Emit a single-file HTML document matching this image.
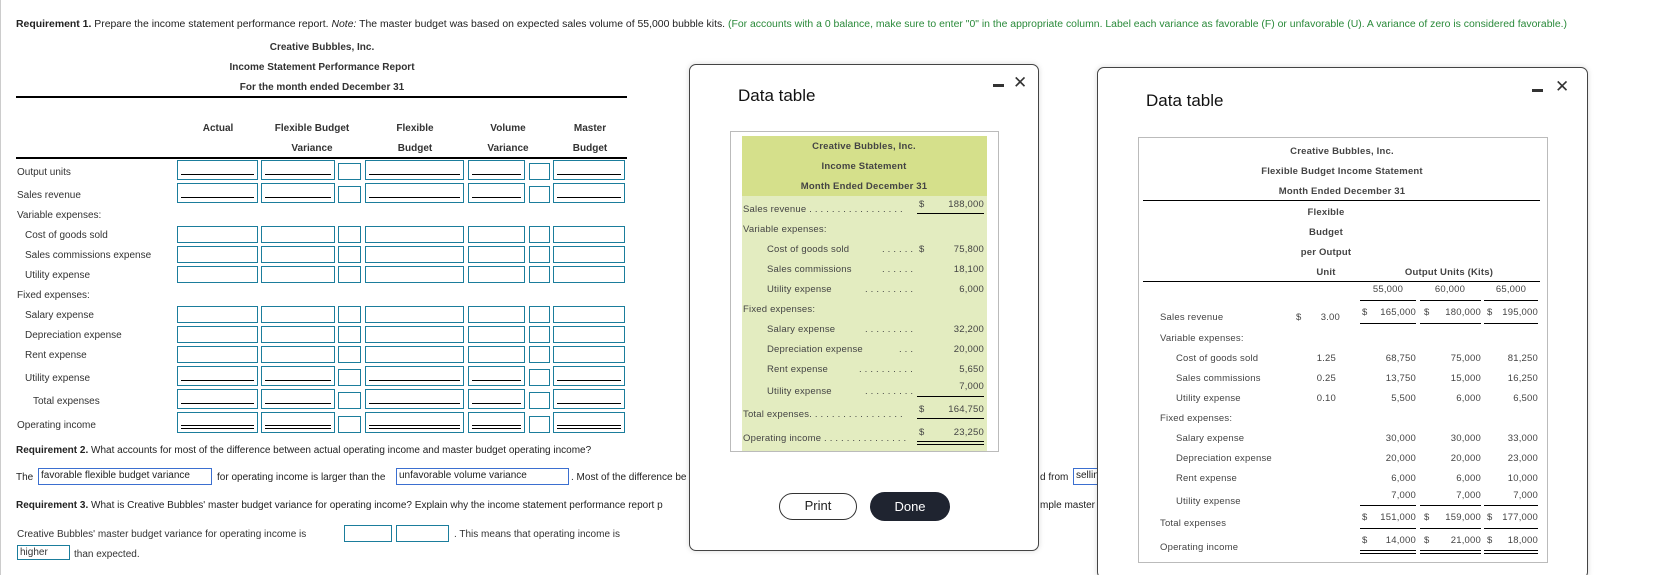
<!DOCTYPE html>
<html><head><meta charset="utf-8"><style>
*{margin:0;padding:0;box-sizing:border-box}
html{width:1661px;height:575px;overflow:hidden}
body{width:1661px;height:575px;background:#fff;position:relative;overflow:hidden;font-family:"Liberation Sans",Arial,sans-serif;color:#333;font-size:10px}
.t{position:absolute;white-space:nowrap;line-height:12px}
.c{transform:translateX(-50%)}
.r{transform:translateX(-100%)}
.b{font-weight:bold}
.bx{position:absolute;border:1px solid #1b7d9c;background:#fff}
.ul{position:absolute;left:3px;right:3px;bottom:4px;border-top:1px solid #000}
.dl{position:absolute;left:3px;right:3px;bottom:3px;height:4px;border-top:1px solid #000;border-bottom:1px solid #000}
.hl{position:absolute;background:#000;height:1px}
.ab{position:absolute;border:1px solid #3b6fd0;background:#fff;font-size:10px;line-height:14px;padding-left:2px;color:#222}
.modal{position:absolute;background:#fff;border:1.5px solid #444;border-radius:7px;box-shadow:0 0 6px rgba(0,0,0,.15)}
.m{font-size:9.5px;color:#444;letter-spacing:.2px}
.mb{font-weight:bold;color:#444;font-size:9.5px;letter-spacing:.2px}
</style></head><body>
<div style="position:absolute;left:0;top:0;width:1px;height:575px;background:#ccc"></div>
<svg style="position:absolute;left:0;top:0" width="1661" height="40"><text x="16" y="27" font-family="Liberation Sans, Arial, sans-serif" font-size="10" fill="#222" textLength="1551" lengthAdjust="spacingAndGlyphs"><tspan font-weight="bold">Requirement 1.</tspan> Prepare the income statement performance report. <tspan font-style="italic">Note:</tspan> The master budget was based on expected sales volume of 55,000 bubble kits. <tspan fill="#2a8a3a">(For accounts with a 0 balance, make sure to enter "0" in the appropriate column. Label each variance as favorable (F) or unfavorable (U). A variance of zero is considered favorable.)</tspan></text></svg>

<div class="t b c" style="left:322px;top:42px">Creative Bubbles, Inc.</div>
<div class="t b c" style="left:322px;top:62px">Income Statement Performance Report</div>
<div class="t b c" style="left:322px;top:82px">For the month ended December 31</div>
<div class="hl" style="left:16px;width:611px;top:96px;height:1.5px"></div>
<div class="t b c" style="left:218px;top:123px">Actual</div>
<div class="t b c" style="left:312px;top:123px">Flexible Budget</div>
<div class="t b c" style="left:312px;top:143px">Variance</div>
<div class="t b c" style="left:415px;top:123px">Flexible</div>
<div class="t b c" style="left:415px;top:143px">Budget</div>
<div class="t b c" style="left:508px;top:123px">Volume</div>
<div class="t b c" style="left:508px;top:143px">Variance</div>
<div class="t b c" style="left:590px;top:123px">Master</div>
<div class="t b c" style="left:590px;top:143px">Budget</div>
<div class="hl" style="left:16px;width:611px;top:157px;height:1.5px"></div>

<div class="t" style="left:17px;top:167px">Output units</div>
<div class="t" style="left:17px;top:190px">Sales revenue</div>
<div class="t" style="left:17px;top:210px">Variable expenses:</div>
<div class="t" style="left:25px;top:230px">Cost of goods sold</div>
<div class="t" style="left:25px;top:250px">Sales commissions expense</div>
<div class="t" style="left:25px;top:270px">Utility expense</div>
<div class="t" style="left:17px;top:290px">Fixed expenses:</div>
<div class="t" style="left:25px;top:310px">Salary expense</div>
<div class="t" style="left:25px;top:330px">Depreciation expense</div>
<div class="t" style="left:25px;top:350px">Rent expense</div>
<div class="t" style="left:25px;top:373px">Utility expense</div>
<div class="t" style="left:33px;top:396px">Total expenses</div>
<div class="t" style="left:17px;top:420px">Operating income</div>

<div class="t" style="left:16px;top:445px;color:#222"><b>Requirement 2.</b> What accounts for most of the difference between actual operating income and master budget operating income?</div>
<div class="t" style="left:16px;top:472px;color:#222">The</div>
<div class="ab" style="left:38px;top:468px;width:174px;height:17px">favorable flexible budget variance</div>
<div class="t" style="left:217px;top:472px;color:#222">for operating income is larger than the</div>
<div class="ab" style="left:396px;top:468px;width:173px;height:17px">unfavorable volume variance</div>
<div class="t" style="left:571px;top:472px;color:#222">. Most of the difference be</div>
<div class="t" style="left:16px;top:500px;color:#222"><b>Requirement 3.</b> What is Creative Bubbles' master budget variance for operating income? Explain why the income statement performance report p</div>
<div class="t" style="left:17px;top:529px">Creative Bubbles' master budget variance for operating income is</div>
<div class="bx" style="left:344px;top:525px;width:48px;height:17px"></div>
<div class="bx" style="left:396px;top:525px;width:53px;height:17px"></div>
<div class="t" style="left:454px;top:529px">. This means that operating income is</div>
<div class="bx" style="left:17px;top:545px;width:53px;height:15px;font-size:10px;line-height:13px;padding-left:2px">higher</div>
<div class="t" style="left:74px;top:549px">than expected.</div>

<div class="t" style="left:1040px;top:472px;color:#222">d from</div>
<div class="ab" style="left:1073px;top:468px;width:40px;height:17px">selling</div>
<div class="t" style="left:1040px;top:500px;color:#222">mple master</div>

<!-- Modal 1 -->
<div class="modal" style="left:689px;top:64px;width:350px;height:487px">
 <div class="t" style="left:48px;top:21px;font-size:17px;line-height:20px;color:#111">Data table</div>
 <div style="position:absolute;left:303px;top:19px;width:11px;height:2.5px;background:#333"></div>
 <div class="t" style="left:323px;top:8px;font-size:17px;line-height:20px;color:#333">✕</div>
 <div style="position:absolute;left:40px;top:66px;width:269px;height:321px;border:1px solid #bbb"></div>
 <div style="position:absolute;left:52px;top:71px;width:245px;height:60px;background:#d5e08b"></div>
 <div style="position:absolute;left:52px;top:131px;width:245px;height:255px;background:#e3ecc0"></div>
</div>
<div class="t mb c" style="left:864px;top:141px">Creative Bubbles, Inc.</div>
<div class="t mb c" style="left:864px;top:161px">Income Statement</div>
<div class="t mb c" style="left:864px;top:181px">Month Ended December 31</div>
<div class="t m" style="left:743px;top:204px">Sales revenue . . . . . . . . . . . . . . . . .</div>
<div class="t m" style="left:919px;top:199px">$</div>
<div class="t m r" style="left:984px;top:199px">188,000</div>
<div class="hl" style="left:917px;width:67px;top:213px"></div>
<div class="t m" style="left:743px;top:224px">Variable expenses:</div>
<div class="t m" style="left:767px;top:244px">Cost of goods sold</div><div class="t m" style="left:882px;top:244px">. . . . . .</div>
<div class="t m" style="left:919px;top:244px">$</div><div class="t m r" style="left:984px;top:244px">75,800</div>
<div class="t m" style="left:767px;top:264px">Sales commissions</div><div class="t m" style="left:882px;top:264px">. . . . . .</div>
<div class="t m r" style="left:984px;top:264px">18,100</div>
<div class="t m" style="left:767px;top:284px">Utility expense</div><div class="t m" style="left:865px;top:284px">. . . . . . . . .</div>
<div class="t m r" style="left:984px;top:284px">6,000</div>
<div class="t m" style="left:743px;top:304px">Fixed expenses:</div>
<div class="t m" style="left:767px;top:324px">Salary expense</div><div class="t m" style="left:865px;top:324px">. . . . . . . . .</div>
<div class="t m r" style="left:984px;top:324px">32,200</div>
<div class="t m" style="left:767px;top:344px">Depreciation expense</div><div class="t m" style="left:899px;top:344px">. . .</div>
<div class="t m r" style="left:984px;top:344px">20,000</div>
<div class="t m" style="left:767px;top:364px">Rent expense</div><div class="t m" style="left:859px;top:364px">. . . . . . . . . .</div>
<div class="t m r" style="left:984px;top:364px">5,650</div>
<div class="t m" style="left:767px;top:386px">Utility expense</div><div class="t m" style="left:865px;top:386px">. . . . . . . . .</div>
<div class="t m r" style="left:984px;top:381px">7,000</div>
<div class="hl" style="left:917px;width:67px;top:396px"></div>
<div class="t m" style="left:743px;top:409px">Total expenses. . . . . . . . . . . . . . . . .</div>
<div class="t m" style="left:919px;top:404px">$</div><div class="t m r" style="left:984px;top:404px">164,750</div>
<div class="hl" style="left:917px;width:67px;top:418px"></div>
<div class="t m" style="left:743px;top:433px">Operating income . . . . . . . . . . . . . . .</div>
<div class="t m" style="left:919px;top:427px">$</div><div class="t m r" style="left:984px;top:427px">23,250</div>
<div class="hl" style="left:917px;width:67px;top:441px"></div>
<div class="hl" style="left:917px;width:67px;top:444px"></div>
<div style="position:absolute;left:779px;top:493px;width:78px;height:27px;border:1.5px solid #333;border-radius:14px;text-align:center;line-height:24px;font-size:13px;color:#222">Print</div>
<div style="position:absolute;left:870px;top:492px;width:80px;height:29px;background:#1f2430;border-radius:15px;text-align:center;line-height:29px;font-size:13px;color:#fff">Done</div>

<!-- Modal 2 -->
<div class="modal" style="left:1097px;top:67px;width:491px;height:512px">
 <div class="t" style="left:48px;top:23px;font-size:17px;line-height:20px;color:#111">Data table</div>
 <div style="position:absolute;left:434px;top:21px;width:11px;height:2.5px;background:#333"></div>
 <div class="t" style="left:457px;top:9px;font-size:17px;line-height:20px;color:#333">✕</div>
 <div style="position:absolute;left:40px;top:69px;width:410px;height:426px;border:1px solid #bbb"></div>
</div>
<div class="t mb c" style="left:1342px;top:146px">Creative Bubbles, Inc.</div>
<div class="t mb c" style="left:1342px;top:166px">Flexible Budget Income Statement</div>
<div class="t mb c" style="left:1342px;top:186px">Month Ended December 31</div>
<div class="hl" style="left:1143px;width:397px;top:200px"></div>
<div class="t mb c" style="left:1326px;top:207px">Flexible</div>
<div class="t mb c" style="left:1326px;top:227px">Budget</div>
<div class="t mb c" style="left:1326px;top:247px">per Output</div>
<div class="t mb c" style="left:1326px;top:267px">Unit</div>
<div class="t mb c" style="left:1449px;top:267px">Output Units (Kits)</div>
<div class="hl" style="left:1143px;width:397px;top:281px"></div>
<div class="t m c" style="left:1388px;top:284px">55,000</div>
<div class="t m c" style="left:1450px;top:284px">60,000</div>
<div class="t m c" style="left:1511px;top:284px">65,000</div>
<div class="hl" style="left:1360px;width:56px;top:300px"></div><div class="hl" style="left:1420px;width:61px;top:300px"></div><div class="hl" style="left:1484px;width:54px;top:300px"></div>

<div class="t m" style="left:1160px;top:312px">Sales revenue</div>
<div class="t m" style="left:1296px;top:312px">$</div><div class="t m r" style="left:1340px;top:312px">3.00</div>
<div class="t m" style="left:1362px;top:307px">$</div><div class="t m r" style="left:1416px;top:307px">165,000</div>
<div class="t m" style="left:1424px;top:307px">$</div><div class="t m r" style="left:1481px;top:307px">180,000</div>
<div class="t m" style="left:1487px;top:307px">$</div><div class="t m r" style="left:1538px;top:307px">195,000</div>
<div class="hl" style="left:1360px;width:56px;top:323px"></div><div class="hl" style="left:1420px;width:61px;top:323px"></div><div class="hl" style="left:1484px;width:54px;top:323px"></div>
<div class="t m" style="left:1160px;top:333px">Variable expenses:</div>
<div class="t m" style="left:1176px;top:353px">Cost of goods sold</div><div class="t m r" style="left:1336px;top:353px">1.25</div>
<div class="t m r" style="left:1416px;top:353px">68,750</div><div class="t m r" style="left:1481px;top:353px">75,000</div><div class="t m r" style="left:1538px;top:353px">81,250</div>
<div class="t m" style="left:1176px;top:373px">Sales commissions</div><div class="t m r" style="left:1336px;top:373px">0.25</div>
<div class="t m r" style="left:1416px;top:373px">13,750</div><div class="t m r" style="left:1481px;top:373px">15,000</div><div class="t m r" style="left:1538px;top:373px">16,250</div>
<div class="t m" style="left:1176px;top:393px">Utility expense</div><div class="t m r" style="left:1336px;top:393px">0.10</div>
<div class="t m r" style="left:1416px;top:393px">5,500</div><div class="t m r" style="left:1481px;top:393px">6,000</div><div class="t m r" style="left:1538px;top:393px">6,500</div>
<div class="t m" style="left:1160px;top:413px">Fixed expenses:</div>
<div class="t m" style="left:1176px;top:433px">Salary expense</div>
<div class="t m r" style="left:1416px;top:433px">30,000</div><div class="t m r" style="left:1481px;top:433px">30,000</div><div class="t m r" style="left:1538px;top:433px">33,000</div>
<div class="t m" style="left:1176px;top:453px">Depreciation expense</div>
<div class="t m r" style="left:1416px;top:453px">20,000</div><div class="t m r" style="left:1481px;top:453px">20,000</div><div class="t m r" style="left:1538px;top:453px">23,000</div>
<div class="t m" style="left:1176px;top:473px">Rent expense</div>
<div class="t m r" style="left:1416px;top:473px">6,000</div><div class="t m r" style="left:1481px;top:473px">6,000</div><div class="t m r" style="left:1538px;top:473px">10,000</div>
<div class="t m" style="left:1176px;top:496px">Utility expense</div>
<div class="t m r" style="left:1416px;top:490px">7,000</div><div class="t m r" style="left:1481px;top:490px">7,000</div><div class="t m r" style="left:1538px;top:490px">7,000</div>
<div class="hl" style="left:1360px;width:56px;top:505px"></div><div class="hl" style="left:1420px;width:61px;top:505px"></div><div class="hl" style="left:1484px;width:54px;top:505px"></div>
<div class="t m" style="left:1160px;top:518px">Total expenses</div>
<div class="t m" style="left:1362px;top:512px">$</div><div class="t m r" style="left:1416px;top:512px">151,000</div>
<div class="t m" style="left:1424px;top:512px">$</div><div class="t m r" style="left:1481px;top:512px">159,000</div>
<div class="t m" style="left:1487px;top:512px">$</div><div class="t m r" style="left:1538px;top:512px">177,000</div>
<div class="hl" style="left:1360px;width:56px;top:528px"></div><div class="hl" style="left:1420px;width:61px;top:528px"></div><div class="hl" style="left:1484px;width:54px;top:528px"></div>
<div class="t m" style="left:1160px;top:542px">Operating income</div>
<div class="t m" style="left:1362px;top:535px">$</div><div class="t m r" style="left:1416px;top:535px">14,000</div>
<div class="t m" style="left:1424px;top:535px">$</div><div class="t m r" style="left:1481px;top:535px">21,000</div>
<div class="t m" style="left:1487px;top:535px">$</div><div class="t m r" style="left:1538px;top:535px">18,000</div>
<div class="hl" style="left:1360px;width:56px;top:550px"></div><div class="hl" style="left:1420px;width:61px;top:550px"></div><div class="hl" style="left:1484px;width:54px;top:550px"></div>
<div class="hl" style="left:1360px;width:56px;top:553px"></div><div class="hl" style="left:1420px;width:61px;top:553px"></div><div class="hl" style="left:1484px;width:54px;top:553px"></div>

<div>
<div class="bx" style="left:177px;top:160px;width:81px;height:20px"><div class="ul"></div></div>
<div class="bx" style="left:261px;top:160px;width:74px;height:20px"><div class="ul"></div></div>
<div class="bx" style="left:338px;top:163px;width:23px;height:17px"></div>
<div class="bx" style="left:365px;top:160px;width:99px;height:20px"><div class="ul"></div></div>
<div class="bx" style="left:468px;top:160px;width:57px;height:20px"><div class="ul"></div></div>
<div class="bx" style="left:529px;top:163px;width:21px;height:17px"></div>
<div class="bx" style="left:553px;top:160px;width:72px;height:20px"><div class="ul"></div></div>
<div class="bx" style="left:177px;top:183px;width:81px;height:20px"><div class="ul"></div></div>
<div class="bx" style="left:261px;top:183px;width:74px;height:20px"><div class="ul"></div></div>
<div class="bx" style="left:338px;top:186px;width:23px;height:17px"></div>
<div class="bx" style="left:365px;top:183px;width:99px;height:20px"><div class="ul"></div></div>
<div class="bx" style="left:468px;top:183px;width:57px;height:20px"><div class="ul"></div></div>
<div class="bx" style="left:529px;top:186px;width:21px;height:17px"></div>
<div class="bx" style="left:553px;top:183px;width:72px;height:20px"><div class="ul"></div></div>
<div class="bx" style="left:177px;top:226px;width:81px;height:17px"></div><div class="bx" style="left:261px;top:226px;width:74px;height:17px"></div><div class="bx" style="left:338px;top:226px;width:23px;height:17px"></div><div class="bx" style="left:365px;top:226px;width:99px;height:17px"></div><div class="bx" style="left:468px;top:226px;width:57px;height:17px"></div><div class="bx" style="left:529px;top:226px;width:21px;height:17px"></div><div class="bx" style="left:553px;top:226px;width:72px;height:17px"></div>
<div class="bx" style="left:177px;top:246px;width:81px;height:17px"></div><div class="bx" style="left:261px;top:246px;width:74px;height:17px"></div><div class="bx" style="left:338px;top:246px;width:23px;height:17px"></div><div class="bx" style="left:365px;top:246px;width:99px;height:17px"></div><div class="bx" style="left:468px;top:246px;width:57px;height:17px"></div><div class="bx" style="left:529px;top:246px;width:21px;height:17px"></div><div class="bx" style="left:553px;top:246px;width:72px;height:17px"></div>
<div class="bx" style="left:177px;top:266px;width:81px;height:17px"></div><div class="bx" style="left:261px;top:266px;width:74px;height:17px"></div><div class="bx" style="left:338px;top:266px;width:23px;height:17px"></div><div class="bx" style="left:365px;top:266px;width:99px;height:17px"></div><div class="bx" style="left:468px;top:266px;width:57px;height:17px"></div><div class="bx" style="left:529px;top:266px;width:21px;height:17px"></div><div class="bx" style="left:553px;top:266px;width:72px;height:17px"></div>
<div class="bx" style="left:177px;top:306px;width:81px;height:17px"></div><div class="bx" style="left:261px;top:306px;width:74px;height:17px"></div><div class="bx" style="left:338px;top:306px;width:23px;height:17px"></div><div class="bx" style="left:365px;top:306px;width:99px;height:17px"></div><div class="bx" style="left:468px;top:306px;width:57px;height:17px"></div><div class="bx" style="left:529px;top:306px;width:21px;height:17px"></div><div class="bx" style="left:553px;top:306px;width:72px;height:17px"></div>
<div class="bx" style="left:177px;top:326px;width:81px;height:17px"></div><div class="bx" style="left:261px;top:326px;width:74px;height:17px"></div><div class="bx" style="left:338px;top:326px;width:23px;height:17px"></div><div class="bx" style="left:365px;top:326px;width:99px;height:17px"></div><div class="bx" style="left:468px;top:326px;width:57px;height:17px"></div><div class="bx" style="left:529px;top:326px;width:21px;height:17px"></div><div class="bx" style="left:553px;top:326px;width:72px;height:17px"></div>
<div class="bx" style="left:177px;top:346px;width:81px;height:17px"></div><div class="bx" style="left:261px;top:346px;width:74px;height:17px"></div><div class="bx" style="left:338px;top:346px;width:23px;height:17px"></div><div class="bx" style="left:365px;top:346px;width:99px;height:17px"></div><div class="bx" style="left:468px;top:346px;width:57px;height:17px"></div><div class="bx" style="left:529px;top:346px;width:21px;height:17px"></div><div class="bx" style="left:553px;top:346px;width:72px;height:17px"></div>
<div class="bx" style="left:177px;top:366px;width:81px;height:20px"><div class="ul"></div></div>
<div class="bx" style="left:261px;top:366px;width:74px;height:20px"><div class="ul"></div></div>
<div class="bx" style="left:338px;top:369px;width:23px;height:17px"></div>
<div class="bx" style="left:365px;top:366px;width:99px;height:20px"><div class="ul"></div></div>
<div class="bx" style="left:468px;top:366px;width:57px;height:20px"><div class="ul"></div></div>
<div class="bx" style="left:529px;top:369px;width:21px;height:17px"></div>
<div class="bx" style="left:553px;top:366px;width:72px;height:20px"><div class="ul"></div></div>
<div class="bx" style="left:177px;top:389px;width:81px;height:20px"><div class="ul"></div></div>
<div class="bx" style="left:261px;top:389px;width:74px;height:20px"><div class="ul"></div></div>
<div class="bx" style="left:338px;top:392px;width:23px;height:17px"></div>
<div class="bx" style="left:365px;top:389px;width:99px;height:20px"><div class="ul"></div></div>
<div class="bx" style="left:468px;top:389px;width:57px;height:20px"><div class="ul"></div></div>
<div class="bx" style="left:529px;top:392px;width:21px;height:17px"></div>
<div class="bx" style="left:553px;top:389px;width:72px;height:20px"><div class="ul"></div></div>
<div class="bx" style="left:177px;top:412px;width:81px;height:21px"><div class="dl"></div></div>
<div class="bx" style="left:261px;top:412px;width:74px;height:21px"><div class="dl"></div></div>
<div class="bx" style="left:338px;top:416px;width:23px;height:17px"></div>
<div class="bx" style="left:365px;top:412px;width:99px;height:21px"><div class="dl"></div></div>
<div class="bx" style="left:468px;top:412px;width:57px;height:21px"><div class="dl"></div></div>
<div class="bx" style="left:529px;top:416px;width:21px;height:17px"></div>
<div class="bx" style="left:553px;top:412px;width:72px;height:21px"><div class="dl"></div></div>
</div>
</body></html>
